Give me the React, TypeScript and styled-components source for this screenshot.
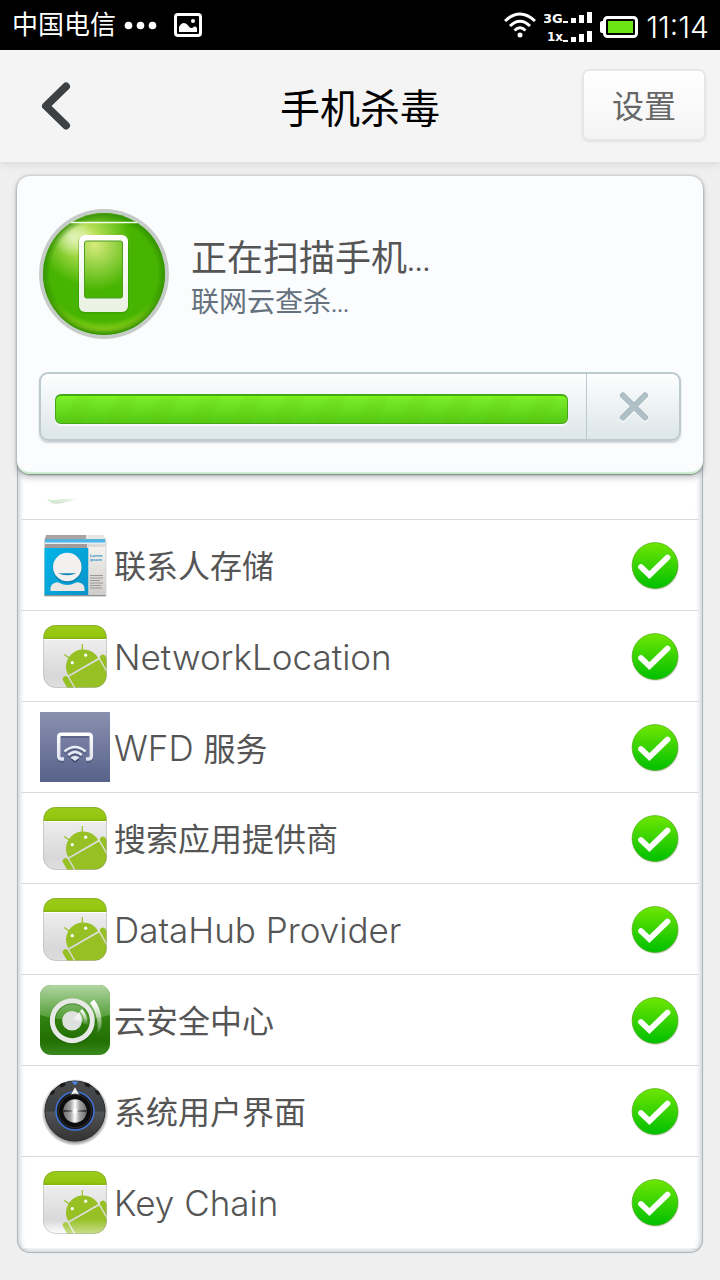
import React from 'react';
import styled, { createGlobalStyle } from 'styled-components';

const GlobalStyle = createGlobalStyle`
  * { box-sizing: border-box; }
  body {
    margin: 0;
    background: #efefef;
    color: #555;
    font-family: Inter, "Noto Sans CJK SC", sans-serif;
  }
  button { font-family: inherit; cursor: pointer; }
  svg { display: block; flex: none; }
`;

const StatusBar = styled.div`
  display: flex;
  align-items: center;
  justify-content: space-between;
  height: 50px;
  padding: 0 11px 0 12px;
  background: #000;
  color: #fff;
`;

const StatusGroup = styled.div`
  display: flex;
  align-items: center;
  gap: 8px;
`;

const Carrier = styled.span`
  font-size: 26px;
  line-height: 32px;
`;

const Clock = styled.span`
  padding-top: 4px;
  font-size: 30px;
  font-weight: 300;
  line-height: 32px;
`;

const Header = styled.header`
  position: relative;
  display: grid;
  grid-template-columns: 1fr auto 1fr;
  align-items: center;
  height: 112px;
  padding: 0 14px 2px 30px;
  background: #f4f4f4;
  box-shadow: 0 2px 8px rgba(0, 0, 0, 0.1);
`;

const BackButton = styled.button`
  justify-self: start;
  padding: 10px 10px 8px;
  border: 0;
  background: none;
`;

const Title = styled.h1`
  margin: 0;
  padding: 8px 16px 0 0;
  color: #000;
  font-size: 40px;
  font-weight: 400;
  line-height: 48px;
`;

const SettingsButton = styled.button`
  justify-self: end;
  width: 124px;
  height: 72px;
  padding: 4px 0 0;
  border: 2px solid #e6e6e6;
  border-radius: 7px;
  background: linear-gradient(#fff, #f4f4f4);
  box-shadow: 0 1px 2px rgba(0, 0, 0, 0.08);
  color: #666;
  font-size: 32px;
  line-height: 40px;
`;

const Main = styled.main`
  padding: 14px 17px 27px;
`;

const ScanCard = styled.section`
  position: relative;
  padding: 33px 22px;
  border-radius: 13px;
  background: #fbfcfe;
  box-shadow:
    inset 0 -3px 1px -1px #c8ebca,
    0 0 3px 1px rgba(0, 0, 0, 0.16),
    0 1px 1px #8d9b9b,
    0 4px 6px rgba(0, 0, 0, 0.22);
`;

const ScanSummary = styled.div`
  display: flex;
  align-items: center;
  gap: 22px;
`;

const ScanTitle = styled.h2`
  margin: 0;
  padding-top: 10px;
  color: #555;
  font-size: 36px;
  font-weight: 400;
  line-height: 44px;
`;

const ScanDetail = styled.p`
  margin: 0;
  color: #65727d;
  font-size: 28px;
  line-height: 36px;
`;

const Dots = styled.span<{ $size: number }>`
  font-size: ${(p) => p.$size}px;
`;

const ProgressBox = styled.div`
  display: flex;
  height: 69px;
  margin-top: 33px;
  border: 2px solid #bccace;
  border-radius: 9px;
  background: linear-gradient(#fdfefe, #dde6e9);
  box-shadow: 0 2px 2px rgba(90, 110, 120, 0.3);
`;

const Track = styled.div`
  flex: 1;
  display: flex;
  align-items: center;
  padding: 4px 18px 0 14px;
`;

const Fill = styled.div`
  width: 100%;
  height: 30px;
  border: 1px solid #47a51c;
  border-top-width: 2px;
  border-radius: 6px;
  background:
    repeating-linear-gradient(115deg, rgba(255, 255, 255, 0.02) 0 16px, rgba(120, 190, 20, 0.1) 20px 34px, rgba(255, 255, 255, 0.02) 38px),
    linear-gradient(#7efd0c 0, #74ea24 3px, #52c80f);
  box-shadow: 0 2px 0 rgba(255, 255, 255, 0.7);
`;

const CancelButton = styled.button`
  display: flex;
  align-items: center;
  justify-content: center;
  width: 93px;
  padding: 0 0 0 2px;
  border: 0;
  border-left: 1px solid #b9c9ce;
  background: none;
`;

const AppList = styled.ul`
  margin: -12px 0 0;
  padding: 0 3px 4px;
  list-style: none;
  border: 1px solid #adb7bc;
  border-width: 0 1px 1px;
  border-radius: 0 0 13px 13px;
  background: #fff;
  box-shadow:
    inset 0 0 6px 1px rgba(70, 85, 95, 0.35),
    0 0 1px #c6ced2;
`;

const AppRow = styled.li`
  display: flex;
  align-items: center;
  height: 91px;
  padding: 0 20px 0 19px;
  border-bottom: 1px solid #dbdbdb;
  background: linear-gradient(90deg, transparent, #fff 5px calc(100% - 5px), transparent);
  &:last-child { border-bottom-color: transparent; }
`;

const ScrolledRow = styled(AppRow)`
  height: 58px;
  align-items: flex-end;
  padding-bottom: 10px;
`;

const AppName = styled.span`
  flex: 1;
  padding: 3px 0 0 4px;
  font-size: 32px;
  line-height: 44px;
`;

const Latin = styled.span`
  font-size: 35px;
  font-weight: 300;
`;

const NetworkIcon = () => (
  <svg width="48" height="36" viewBox="0 -2 48 36" fill="#fff" fontFamily="DejaVu Sans" fontWeight="700">
    <text x="-1" y="14" fontSize="13">3G</text>
    <text x="3" y="32" fontSize="12">1x</text>
    {[14, 33].map((y) => (
      <g key={y}>
        <rect x="19" y={y - 2} width="5" height="2" />
        <rect x="27" y={y - 5} width="5" height="5" />
        <rect x="35" y={y - 8} width="5" height="8" />
        <rect x="43" y={y - 11} width="5" height="11" />
      </g>
    ))}
  </svg>
);

const ScannerBadge = () => (
  <svg width="130" height="130" viewBox="0 0 130 130">
    <defs>
      <radialGradient id="orb" gradientUnits="userSpaceOnUse" cx="46" cy="30" r="46">
        <stop offset="0" stopColor="#e4f08c" />
        <stop offset="0.35" stopColor="#a9db4c" />
        <stop offset="1" stopColor="#46b400" />
      </radialGradient>
      <radialGradient id="orbEdge" cx="0.5" cy="0.5" r="0.5">
        <stop offset="0.88" stopColor="#2f8a00" stopOpacity="0" />
        <stop offset="1" stopColor="#2f8a00" stopOpacity="0.8" />
      </radialGradient>
      <radialGradient id="orbGlow" gradientUnits="userSpaceOnUse" cx="65" cy="46" r="79">
        <stop offset="0.84" stopColor="#a4d822" stopOpacity="0" />
        <stop offset="0.96" stopColor="#a4d822" stopOpacity="0.8" />
        <stop offset="1" stopColor="#7cc810" stopOpacity="0.3" />
      </radialGradient>
      <radialGradient id="shine" gradientUnits="userSpaceOnUse" cx="33" cy="28" r="20">
        <stop offset="0" stopColor="#fff" stopOpacity="0.6" />
        <stop offset="1" stopColor="#fff" stopOpacity="0" />
      </radialGradient>
      <radialGradient id="screen" gradientUnits="userSpaceOnUse" cx="56" cy="36" r="46">
        <stop offset="0" stopColor="#d6ea7c" />
        <stop offset="1" stopColor="#46b400" />
      </radialGradient>
      <linearGradient id="phone" x1="0" y1="0" x2="0" y2="1">
        <stop offset="0" stopColor="#fff" />
        <stop offset="1" stopColor="#e9f1e2" />
      </linearGradient>
      <clipPath id="orbClip"><circle cx="65" cy="65" r="60" /></clipPath>
    </defs>
    <circle cx="65" cy="65" r="65" fill="#c5cbc6" />
    <circle cx="65" cy="65" r="61" fill="url(#orb)" />
    <g clipPath="url(#orbClip)">
      <path d="M0 70H130V130H0Z" fill="url(#orbGlow)" />
      <circle cx="33" cy="28" r="20" fill="url(#shine)" />
      <path d="M0 0H130V13H0Z" fill="#3fa40a" opacity="0.6" />
    </g>
    <circle cx="65" cy="65" r="61" fill="url(#orbEdge)" />
    <path d="M32 13.500H98" stroke="#f6ffe8" strokeWidth="1.500" />
    <rect x="39" y="26" width="51" height="79" rx="7" fill="#2f8a00" opacity="0.35" />
    <rect x="40" y="26" width="49" height="77" rx="6" fill="url(#phone)" />
    <rect x="45.500" y="32" width="38" height="57" rx="2" fill="url(#screen)" stroke="#4c9e1c" />
  </svg>
);

const ContactsIcon = () => (
  <svg width="70" height="70" viewBox="0 0 70 70">
    <defs>
      <linearGradient id="contactBlue" x1="0" y1="0" x2="1" y2="1">
        <stop offset="0" stopColor="#00b4e8" />
        <stop offset="1" stopColor="#0b93c8" />
      </linearGradient>
      <linearGradient id="contactPaper" x1="0" y1="0" x2="0" y2="1">
        <stop offset="0" stopColor="#f4f3ef" />
        <stop offset="1" stopColor="#cfcdc9" />
      </linearGradient>
    </defs>
    <rect x="4" y="8" width="62.500" height="59" rx="1" fill="#000" opacity="0.15" />
    <path d="M6 5H46V9H5Z" fill="#aba3a2" />
    <path d="M46 5H64L65 9H46Z" fill="#e6e5e2" />
    <path d="M5 9H65V13H5Z" fill="#52b4e0" />
    <path d="M5 12.500H65V14H5Z" fill="#dff0f6" />
    <path d="M5 14H47V18H5Z" fill="#a39a99" />
    <path d="M47 14H65V18H47Z" fill="#dddcd9" />
    <path d="M4.500 18H48.500V65H4.500Z" fill="url(#contactBlue)" />
    <path d="M48.500 17H65.500V65H48.500Z" fill="url(#contactPaper)" />
    <path d="M4.500 65H65.500V66H4.500Z" fill="#8c9296" />
    <circle cx="27.300" cy="38" r="14.800" fill="#06638c" opacity="0.5" />
    <circle cx="27.300" cy="37" r="14.300" fill="#f2f1ef" />
    <path d="M18 43.300H36.500Q27.300 47 18 43.300Z" fill="#0b87b8" />
    <path d="M10.500 61V58Q11 53.500 16 52.500Q18 52 19.500 53Q27.300 57 35 53Q37 52 39 52.500Q44 53.500 44.500 58V61Z" fill="#e9e8e5" />
    <g fill="#1c8fc2" fontFamily="Liberation Sans" fontSize="4" fontWeight="700">
      <text x="50" y="27">Lorem</text>
      <text x="50" y="31">ipsum</text>
    </g>
    <path d="M50 45.500H63M50 48H63M50 50.500H60M50 53H63M50 55.500H61M50 58H62" stroke="#8b8986" strokeWidth="0.800" />
  </svg>
);

const AndroidIcon = ({ id, faded }: { id: string; faded?: boolean }) => (
  <svg width="70" height="70" viewBox="0 0 70 70">
    <defs>
      <linearGradient id={`${id}-paper`} x1="0" y1="0" x2="0" y2="1">
        <stop offset="0.2" stopColor="#efefef" />
        <stop offset="0.8" stopColor="#d8d8d8" />
        <stop offset="1" stopColor={faded ? '#f8f8f8' : '#dedede'} />
      </linearGradient>
      <linearGradient id={`${id}-fade`} x1="0" y1="0" x2="0" y2="1">
        <stop offset="0" stopColor="#fff" stopOpacity="0" />
        <stop offset="1" stopColor="#fff" stopOpacity="0.5" />
      </linearGradient>
      <linearGradient id={`${id}-top`} x1="0" y1="0" x2="0" y2="1">
        <stop offset="0" stopColor="#9ccb1b" />
        <stop offset="0.8" stopColor="#94c70f" />
        <stop offset="1" stopColor="#82b010" />
      </linearGradient>
      <clipPath id={`${id}-clip`}><rect x="3.500" y="4" width="63" height="62.500" rx="12" /></clipPath>
    </defs>
    <g clipPath={`url(#${id}-clip)`}>
      <rect x="3" y="4" width="64" height="63" fill={`url(#${id}-paper)`} />
      <rect x="3" y="4" width="64" height="14" fill={`url(#${id}-top)`} />
      <path d="M3 18.500H67" stroke="#fff" />
      <g fill="#97c024" transform="translate(43.300 45.700) rotate(-30)">
        <path d="M-17.300 0A17.300 17.300 0 0 1 17.300 0Z" />
        <path d="M-17.300 1.700H17.300V40H-17.300Z" />
        <rect x="-24.500" y="-1" width="5.900" height="26" rx="2.900" />
        <rect x="18.600" y="-1" width="5.900" height="26" rx="2.900" />
      </g>
      <path d="M42.300 23V30M24.300 33.500L29.500 37.200" stroke="#97c024" strokeWidth="1.200" />
      <circle cx="32.300" cy="41.700" r="1.600" fill="#fff" />
      <circle cx="45.700" cy="34.200" r="1.600" fill="#fff" />
      {faded && <rect x="3" y="52" width="64" height="15" fill={`url(#${id}-fade)`} />}
    </g>
    <rect x="3.500" y="4.500" width="63" height="62" rx="12" fill="none" stroke="#6b7355" strokeOpacity="0.3" />
  </svg>
);

const WfdIcon = () => (
  <svg width="70" height="70" viewBox="0 0 70 70" fill="none">
    <defs>
      <linearGradient id="wfdBack" x1="0" y1="0" x2="0" y2="1">
        <stop offset="0" stopColor="#8a91b0" />
        <stop offset="1" stopColor="#57628a" />
      </linearGradient>
      <linearGradient id="wfdInk" gradientUnits="userSpaceOnUse" x1="0" y1="20" x2="0" y2="49">
        <stop offset="0" stopColor="#fff" />
        <stop offset="1" stopColor="#dde1ee" />
      </linearGradient>
    </defs>
    <rect width="70" height="70" fill="url(#wfdBack)" />
    {[false, true].map((front) => (
      <g key={String(front)} stroke={front ? 'url(#wfdInk)' : '#3a4468'} strokeOpacity={front ? 1 : 0.45} transform={front ? undefined : 'translate(0 2)'} strokeWidth="2.600">
        <path d="M24 47H21.500Q18.700 47 18.700 44V25Q18.700 22.200 21.500 22.200H48.500Q51.300 22.200 51.300 25V44Q51.300 47 48.500 47H46" strokeWidth="3.500" />
        <path d="M24.500 39.500Q35 30.500 45.500 39.500" />
        <path d="M28.200 43Q35 36.800 41.800 43" />
        <path d="M31 45.500Q35 43 39 45.500L35 48.500Z" fill={front ? '#e4e7f1' : '#3a4468'} strokeWidth="1" />
      </g>
    ))}
  </svg>
);

const CloudSafeIcon = () => (
  <svg width="70" height="70" viewBox="0 0 70 70" fill="none">
    <defs>
      <linearGradient id="safeBack" x1="0" y1="0" x2="0" y2="1">
        <stop offset="0.4" stopColor="#338512" />
        <stop offset="0.8" stopColor="#226f02" />
        <stop offset="1" stopColor="#3a8a20" />
      </linearGradient>
      <linearGradient id="safeGloss" x1="0" y1="0" x2="0" y2="1">
        <stop offset="0" stopColor="#b1d6a2" />
        <stop offset="1" stopColor="#4c9a30" />
      </linearGradient>
      <linearGradient id="safeWave" x1="0" y1="0" x2="0" y2="1">
        <stop offset="0.1" stopColor="#fff" />
        <stop offset="1" stopColor="#fff" stopOpacity="0.1" />
      </linearGradient>
      <clipPath id="safeClip"><rect width="70" height="70" rx="11" /></clipPath>
    </defs>
    <g clipPath="url(#safeClip)">
      <rect width="70" height="70" fill="url(#safeBack)" />
      <path d="M0 0H70V30Q35 40 0 30Z" fill="url(#safeGloss)" />
    </g>
    <circle cx="32.300" cy="36.500" r="20" stroke="#184f04" strokeOpacity="0.35" strokeWidth="6" />
    <circle cx="32.300" cy="35.700" r="20" stroke="#e6e9e5" strokeWidth="5" />
    <circle cx="32" cy="35.700" r="9.800" fill="#dfe1de" />
    <path d="M33 34L42 24Q48 30 47.500 40Z" fill="url(#safeWave)" />
    <path d="M39.500 26.500Q44 31 43.500 38M44 24Q50 30 48.500 40" stroke="#3f9020" strokeWidth="1.200" strokeOpacity="0.7" />
    <path d="M50 18L54 14.500Q63 26 61.300 42L57.500 49Q59 30 50 18Z" fill="url(#safeWave)" />
  </svg>
);

const KnobIcon = () => (
  <svg width="70" height="70" viewBox="0 0 70 70">
    <defs>
      <linearGradient id="knobBody" x1="0" y1="0" x2="0" y2="1">
        <stop offset="0" stopColor="#4a4b4d" />
        <stop offset="0.5" stopColor="#3d3e40" />
        <stop offset="0.52" stopColor="#525355" />
        <stop offset="1" stopColor="#333" />
      </linearGradient>
      <linearGradient id="knobMetal" x1="0" y1="0" x2="1" y2="0">
        <stop offset="0" stopColor="#6d6d6d" />
        <stop offset="0.3" stopColor="#a2a2a2" />
        <stop offset="0.5" stopColor="#fff" />
        <stop offset="0.7" stopColor="#a2a2a2" />
        <stop offset="1" stopColor="#6d6d6d" />
      </linearGradient>
      <radialGradient id="knobShadow">
        <stop offset="0.85" stopColor="#000" stopOpacity="0.5" />
        <stop offset="1" stopColor="#000" stopOpacity="0" />
      </radialGradient>
    </defs>
    <circle cx="35" cy="36.500" r="33.500" fill="url(#knobShadow)" />
    <circle cx="35" cy="35" r="30" fill="url(#knobBody)" stroke="#2b2c2e" />
    <g fill="#1b1b1c">
      <ellipse cx="22.500" cy="9" rx="3.200" ry="1.800" transform="rotate(-25 22.500 9)" />
      <ellipse cx="47.500" cy="9" rx="3.200" ry="1.800" transform="rotate(25 47.500 9)" />
      <ellipse cx="12.500" cy="16.500" rx="3" ry="1.600" transform="rotate(-50 12.500 16.500)" />
      <ellipse cx="57.500" cy="16.500" rx="3" ry="1.600" transform="rotate(50 57.500 16.500)" />
    </g>
    <path d="M31.500 5.500H38.500L35 9.200Z" fill="#4f86f0" />
    <circle cx="35" cy="35" r="19" fill="#1b1c1e" stroke="#3f74dc" strokeWidth="1.500" />
    <circle cx="35" cy="35" r="16.500" fill="#0d0d0e" stroke="#2c2c2d" />
    <path d="M35 10.500L30.300 19Q35 16.800 39.700 19Z" fill="#f1f1f1" stroke="#232323" strokeWidth="0.600" />
    <circle cx="35" cy="35" r="11.700" fill="url(#knobMetal)" />
    <path d="M35 35L23.500 34V36ZM35 35L46.500 34V36Z" fill="#333" />
    <circle cx="35" cy="35" r="2.500" fill="#fff" opacity="0.8" />
  </svg>
);

const SafeMark = () => (
  <svg width="48" height="50" viewBox="0 0 48 50" role="img" aria-label="安全">
    <defs>
      <linearGradient id="mark" x1="0" y1="0" x2="0" y2="1">
        <stop offset="0" stopColor="#6fe603" />
        <stop offset="1" stopColor="#00c000" />
      </linearGradient>
      <radialGradient id="markShadow">
        <stop offset="0.88" stopColor="#000" stopOpacity="0.3" />
        <stop offset="1" stopColor="#000" stopOpacity="0" />
      </radialGradient>
    </defs>
    <circle cx="24.500" cy="26.500" r="24" fill="url(#markShadow)" />
    <circle cx="24" cy="25.500" r="22.900" fill="url(#mark)" stroke="#4fae14" strokeOpacity="0.7" />
    <path d="M10 27L18.400 35L36.500 17.500" fill="none" stroke="#fff" strokeWidth="5.800" strokeLinecap="round" />
  </svg>
);

const apps: { key: string; icon: React.ReactNode; name: React.ReactNode }[] = [
  { key: 'contacts', icon: <ContactsIcon />, name: '联系人存储' },
  { key: 'network', icon: <AndroidIcon id="network" />, name: <Latin>NetworkLocation</Latin> },
  { key: 'wfd', icon: <WfdIcon />, name: <><Latin>WFD </Latin>服务</> },
  { key: 'search', icon: <AndroidIcon id="search" />, name: '搜索应用提供商' },
  { key: 'datahub', icon: <AndroidIcon id="datahub" />, name: <Latin>DataHub Provider</Latin> },
  { key: 'safe', icon: <CloudSafeIcon />, name: '云安全中心' },
  { key: 'systemui', icon: <KnobIcon />, name: '系统用户界面' },
  { key: 'keychain', icon: <AndroidIcon id="keychain" faded />, name: <Latin>Key Chain</Latin> },
];

export default function App() {
  return (
    <>
      <GlobalStyle />
      <StatusBar>
        <StatusGroup>
          <Carrier>中国电信</Carrier>
          <svg width="34" height="10" viewBox="0 0 34 10" fill="#fff">
            <circle cx="4.500" cy="5.500" r="3.800" />
            <circle cx="16.500" cy="5.500" r="3.800" />
            <circle cx="28.500" cy="5.500" r="3.800" />
          </svg>
          <svg width="44" height="24" viewBox="-8 0 44 24" fill="none">
            <rect x="1.500" y="1.500" width="25" height="21" rx="2.500" stroke="#fff" strokeWidth="3" />
            <path d="M5 19V14Q7 10 10 10Q12.500 10 14.500 13Q16.500 16 19 14.500Q21 12.500 23 15V19Z" fill="#fff" />
            <circle cx="19" cy="8" r="2" fill="#fff" />
          </svg>
        </StatusGroup>
        <StatusGroup>
          <svg width="32" height="26" viewBox="0 0 32 26" fill="none" stroke="#fff" strokeWidth="3">
            <path d="M1 9Q16 -5 31 9" />
            <path d="M6 14Q16 4.500 26 14" />
            <path d="M10.500 18.500Q16 13 21.500 18.500" />
            <circle cx="16" cy="23" r="2.500" fill="#fff" stroke="none" />
          </svg>
          <NetworkIcon />
          <svg width="38" height="26" viewBox="0 -4 38 26">
            <rect x="0" y="5" width="5" height="12" rx="2" fill="#fff" />
            <rect x="4.500" y="1.500" width="32" height="19" rx="3" fill="#000" stroke="#fff" strokeWidth="3" />
            <rect x="8" y="5" width="25" height="12" fill="#6ce515" />
          </svg>
          <Clock>11:14</Clock>
        </StatusGroup>
      </StatusBar>

      <Header>
        <BackButton aria-label="返回">
          <svg width="32" height="52" viewBox="0 0 32 52" fill="none" strokeLinecap="round" strokeLinejoin="round" strokeWidth="8">
            <path d="M26 8L6 27L26 46" stroke="#fff" />
            <path d="M26 6.500L6 26L26 45.500" stroke="#3d4144" />
          </svg>
        </BackButton>
        <Title>手机杀毒</Title>
        <SettingsButton>设置</SettingsButton>
      </Header>

      <Main>
        <ScanCard>
          <ScanSummary>
            <ScannerBadge />
            <div>
              <ScanTitle>正在扫描手机<Dots $size={27}>...</Dots></ScanTitle>
              <ScanDetail>联网云查杀<Dots $size={21}>...</Dots></ScanDetail>
            </div>
          </ScanSummary>
          <ProgressBox>
            <Track>
              <Fill role="progressbar" aria-label="扫描进度" aria-valuenow={100} />
            </Track>
            <CancelButton aria-label="取消">
              <svg width="32" height="32" viewBox="0 0 32 32" fill="none" strokeLinecap="round" strokeWidth="6">
                <path d="M5 6L27 28M27 6L5 28" stroke="#fff" />
                <path d="M5 4.500L27 26.500M27 4.500L5 26.500" stroke="#a2b2b9" />
                <path d="M5 5L27 27M27 5L5 27" stroke="#afc0c6" strokeWidth="5" />
              </svg>
            </CancelButton>
          </ProgressBox>
        </ScanCard>

        <AppList>
          <ScrolledRow aria-hidden="true">
            <svg width="52" height="12" viewBox="0 0 52 12">
              <defs>
                <linearGradient id="sliver" x1="0" y1="0" x2="1" y2="0">
                  <stop offset="0" stopColor="#cdeccb" />
                  <stop offset="0.5" stopColor="#e2f0e2" />
                  <stop offset="1" stopColor="#fff" stopOpacity="0" />
                </linearGradient>
              </defs>
              <path d="M7 2Q14 4 22 2L48 1Q30 4 20 6Q12 8 7 2Z" fill="url(#sliver)" />
              <path d="M10 5Q16 7 30 3Q16 10 10 5Z" fill="#999" opacity="0.2" />
            </svg>
          </ScrolledRow>
          {apps.map((app) => (
            <AppRow key={app.key}>
              {app.icon}
              <AppName>{app.name}</AppName>
              <SafeMark />
            </AppRow>
          ))}
        </AppList>
      </Main>
    </>
  );
}
